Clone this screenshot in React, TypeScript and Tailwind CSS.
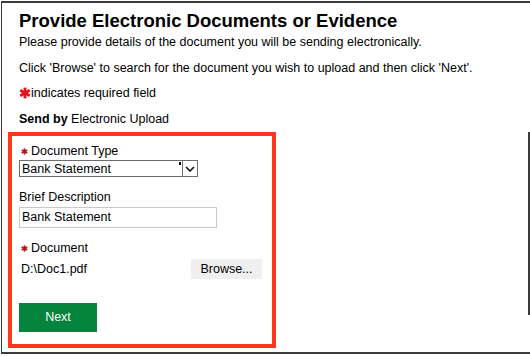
import React from 'react';

const Star = ({ className }: { className?: string }) => (
  <svg viewBox="0 0 10 10" className={className} aria-hidden="true">
    <g stroke="currentColor" strokeWidth="2.4" strokeLinecap="butt">
      <line x1="5" y1="0.5" x2="5" y2="9.5" />
      <line x1="1.1" y1="2.75" x2="8.9" y2="7.25" />
      <line x1="1.1" y1="7.25" x2="8.9" y2="2.75" />
    </g>
  </svg>
);

const App = () => {
  return (
    <div className="relative h-[356px] w-[530px] overflow-hidden bg-white font-['Liberation_Sans',Arial,sans-serif] text-[12.5px] text-black">
      <div className="ml-px mt-px h-[353px] border-b-2 border-l border-t-2 border-[#3a3a3a]">
        <div className="pl-[17px]">
          <h1 className="pt-[7px] text-[18.5px] font-bold leading-[22px]">Provide Electronic Documents or Evidence</h1>
          <p className="mt-[2px] leading-4">Please provide details of the document you will be sending electronically.</p>
          <p className="mt-[10px] leading-4">Click 'Browse' to search for the document you wish to upload and then click 'Next'.</p>
          <p className="mt-[9px] flex items-center leading-4">
            <Star className="h-[12px] w-[12px] text-[#e3141c]" />
            <span>indicates required field</span>
          </p>
          <p className="mt-[10px] leading-4">
            <span className="font-bold">Send by</span> Electronic Upload
          </p>
        </div>

        <div className="ml-[6px] mt-[5px] w-[268px] border-4 border-[#ff3522] pb-[12px] pl-[7px] pt-[7px]">
          <label className="flex items-center leading-4">
            <Star className="ml-[2px] mr-[3px] h-[7px] w-[7px] text-[#b3121c]" />
            Document Type
          </label>
          <div className="relative mt-px flex h-[17px] w-[179px] items-center border border-[#6d6d6d] bg-white">
            <span className="pl-[2px] leading-4">Bank Statement</span>
            <span className="absolute right-[16px] top-[1px] h-[3px] w-[2px] bg-black" />
            <span className="ml-auto flex h-full w-[15px] items-center justify-center border-l border-[#6d6d6d]">
              <svg viewBox="0 0 10 6" className="h-[6px] w-[10px]" fill="none" stroke="#111" strokeWidth="1.6">
                <polyline points="1,1 5,5 9,1" />
              </svg>
            </span>
          </div>

          <label className="mt-[12px] block leading-4">Brief Description</label>
          <div className="mt-[2px] flex h-[21px] w-[198px] items-center border border-[#c8c8c8] pl-[2px]">
            Bank Statement
          </div>

          <label className="mt-[12px] flex items-center leading-4">
            <Star className="ml-[2px] mr-[3px] h-[7px] w-[7px] text-[#b3121c]" />
            Document
          </label>
          <div className="mt-[3px] flex h-[20px] w-[243px] items-center justify-between">
            <span className="pl-[2px] leading-4">D:\Doc1.pdf</span>
            <button className="h-[20px] w-[71px] bg-[#efefef] text-[12.5px] leading-4 text-black">Browse...</button>
          </div>

          <button className="mt-[24px] h-[29px] w-[78px] bg-[#05843d] text-[12.5px] text-white">Next</button>
        </div>
      </div>
      <div className="absolute left-[528px] top-[132px] h-[183px] w-[2px] bg-[#3a3a3a]" />
    </div>
  );
};

export default App;
